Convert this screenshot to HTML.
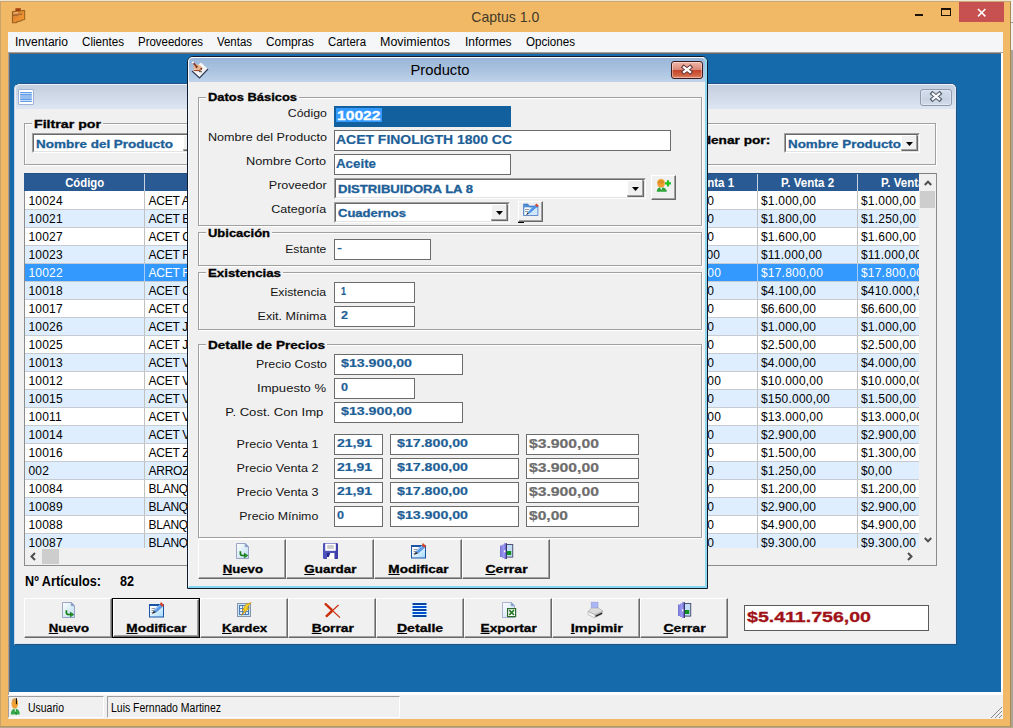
<!DOCTYPE html>
<html><head><meta charset="utf-8"><title>Captus 1.0</title>
<style>
html,body{margin:0;padding:0;}
body{width:1013px;height:728px;position:relative;overflow:hidden;background:#f0b865;font-family:"Liberation Sans",sans-serif;}
div{position:absolute;box-sizing:border-box;}
.t{position:absolute;white-space:nowrap;display:block;}
svg{position:absolute;overflow:visible;}
u{text-decoration:underline;}
</style></head><body>
<div style="left:0px;top:0px;width:1013px;height:728px;background:#aaa493;"></div>
<div style="left:0px;top:0px;width:1013px;height:2px;background:#efe6d2;"></div>
<div style="left:1011px;top:0px;width:2px;height:50px;background:#f2f0eb;"></div>
<div style="left:1011px;top:22px;width:2px;height:1px;background:#9a9a9a;"></div>
<div style="left:0px;top:726px;width:1013px;height:2px;background:#b3a78a;"></div>
<div style="left:0px;top:1px;width:1011px;height:726px;background:#f1b966;border-left:1px solid #c9a26c;border-top:1px solid #c9a674;border-right:1px solid #a88958;border-bottom:1px solid #b89766;"></div>
<svg style="left:12px;top:8px" width="14" height="16" viewBox="0 0 14 16"><defs><linearGradient id="bc" x1="0" y1="0" x2="1" y2="1"><stop offset="0" stop-color="#cf7a3a"/><stop offset="1" stop-color="#fb9d2a"/></linearGradient></defs>
<rect x="3.4" y="0.2" width="5.4" height="3" fill="#a5420f"/>
<path d="M0.4 3.6 L12.7 2.4 V11.6 L9.2 12.2 V13 L5 13.6 V14.6 L0.4 14.9Z" fill="url(#bc)" stroke="#80490f" stroke-width=".8"/>
<path d="M1 7.4 L6 7 L7.5 6 L10 6.4" stroke="#7d5632" stroke-width=".9" fill="none"/><path d="M1.4 5 L6 4.6" stroke="#f6d0a0" stroke-width=".8"/></svg>
<span class="t" style="left:469.23px;top:9px;font-size:15px;line-height:15px;color:#43392a;transform-origin:50% 0;transform:scaleX(0.9373);">Captus 1.0</span>
<div style="left:959px;top:2px;width:45px;height:20px;background:#c75050;"></div>
<svg style="left:977px;top:8px" width="10" height="10" viewBox="0 0 10 10"><path d="M1 1 L8.4 8.4 M8.4 1 L1 8.4" stroke="#fff" stroke-width="1.5" fill="none"/></svg>
<div style="left:915px;top:14px;width:8px;height:2px;background:#1a1204;"></div>
<div style="left:941px;top:8px;width:10px;height:8px;border:1px solid #1a1204;border-top:2px solid #1a1204;"></div>
<div style="left:8px;top:32px;width:995px;height:20px;background:#f5f6f7;"></div>
<span class="t" style="left:15px;top:36px;font-size:12px;line-height:12px;color:#000;transform-origin:0 0;transform:scaleX(1.0057);">Inventario</span>
<span class="t" style="left:82px;top:36px;font-size:12px;line-height:12px;color:#000;transform-origin:0 0;transform:scaleX(0.9688);">Clientes</span>
<span class="t" style="left:138px;top:36px;font-size:12px;line-height:12px;color:#000;transform-origin:0 0;transform:scaleX(0.9553);">Proveedores</span>
<span class="t" style="left:217px;top:36px;font-size:12px;line-height:12px;color:#000;transform-origin:0 0;transform:scaleX(0.9537);">Ventas</span>
<span class="t" style="left:266px;top:36px;font-size:12px;line-height:12px;color:#000;transform-origin:0 0;transform:scaleX(0.9860);">Compras</span>
<span class="t" style="left:328px;top:36px;font-size:12px;line-height:12px;color:#000;transform-origin:0 0;transform:scaleX(0.9496);">Cartera</span>
<span class="t" style="left:380px;top:36px;font-size:12px;line-height:12px;color:#000;transform-origin:0 0;transform:scaleX(1.0393);">Movimientos</span>
<span class="t" style="left:464.5px;top:36px;font-size:12px;line-height:12px;color:#000;transform-origin:0 0;transform:scaleX(0.9961);">Informes</span>
<span class="t" style="left:526px;top:36px;font-size:12px;line-height:12px;color:#000;transform-origin:0 0;transform:scaleX(0.9665);">Opciones</span>
<div style="left:8px;top:52px;width:995px;height:643px;background:#fff;border-top:1px solid #a0a0a0;border-left:1px solid #a0a0a0;"></div>
<div style="left:9px;top:53px;width:992px;height:639px;background:#156aab;border-top:1px solid #6a6a6a;border-left:1px solid #6a6a6a;"></div>
<div style="left:8px;top:695px;width:995px;height:24px;background:#f0f0f0;"></div>
<div style="left:8px;top:696px;width:96px;height:22px;border-top:1px solid #a0a0a0;border-left:1px solid #a0a0a0;border-right:1px solid #fff;border-bottom:1px solid #fff;"></div>
<div style="left:107px;top:696px;width:293px;height:22px;border-top:1px solid #a0a0a0;border-left:1px solid #a0a0a0;border-right:1px solid #fff;border-bottom:1px solid #fff;"></div>
<span class="t" style="left:28px;top:702px;font-size:12px;line-height:12px;color:#000;transform-origin:0 0;transform:scaleX(0.8706);">Usuario</span>
<span class="t" style="left:111px;top:702px;font-size:12px;line-height:12px;color:#000;transform-origin:0 0;transform:scaleX(0.8725);">Luis Fernnado Martinez</span>
<svg style="left:990px;top:706px" width="13" height="13" viewBox="0 0 13 13"><path d="M1 12 L12 1 M5 12 L12 5 M9 12 L12 9" stroke="#8a8a8a" stroke-width="1" fill="none"/></svg>
<svg style="left:10px;top:698px" width="12" height="17" viewBox="0 0 12 17"><ellipse cx="4.8" cy="5.6" rx="3.3" ry="5" fill="#f0a035"/><ellipse cx="4.6" cy="2.4" rx="2.6" ry="1.8" fill="#d9a050"/><rect x="5.9" y="0.2" width="1.1" height="6" fill="#1e1408"/><path d="M0.8 16.6 Q0.8 10.8 5.2 10.8 Q9.8 10.8 9.8 16.6 Z" fill="#35a848"/><path d="M4.6 11 L5.2 15 L5.9 11Z" fill="#fff"/><path d="M5.6 14 L6.4 16.6" stroke="#157a2a" stroke-width="1"/></svg>
<div style="left:14px;top:83px;width:943px;height:562px;background:#f0f0f0;border-radius:6px 6px 0 0;border:1px solid #c9d6e6;border-top-color:#1f5588;border-right-color:#24507f;border-bottom-color:#24507f;"></div>
<div style="left:15px;top:84px;width:941px;height:560px;border-top:1px solid #eef3f9;border-left:1px solid #e9f0f8;border-right:1px solid #dce9f6;border-bottom:1px solid #d6e6f5;border-radius:5px 5px 0 0;"></div>
<div style="left:16px;top:85px;width:939px;height:24px;background:linear-gradient(#c4cfdf,#cfd9e7 45%,#dde6f2);border-radius:4px 4px 0 0;"></div>
<svg style="left:18px;top:89px" width="16" height="16" viewBox="0 0 15 15"><rect x="0.5" y="0.5" width="14" height="14" rx="1" fill="#fff" stroke="#9db4d6"/><path d="M2 3.5H13M2 5.5H13M2 7.5H13M2 9.5H13M2 11.5H13" stroke="#2d7be0" stroke-width="1"/></svg>
<div style="left:920px;top:89px;width:32px;height:17px;border:1px solid #8c9ab0;border-radius:3px;background:linear-gradient(#d3dce9,#cbd5e4 50%,#c6d1e1 51%,#d3dcea);box-shadow:inset 0 0 0 1px rgba(255,255,255,.35);"></div>
<svg style="left:929px;top:91px" width="14" height="11" viewBox="0 0 14 11"><path d="M1.9 1.3 L12.1 9.7 M12.1 1.3 L1.9 9.7" stroke="#4e5867" stroke-width="4.2" fill="none"/><path d="M2.9 2.1 L11.1 8.9 M11.1 2.1 L2.9 8.9" stroke="#f6f8fa" stroke-width="2.3" fill="none"/></svg>
<div style="left:25px;top:124px;width:912px;height:42px;border:1px solid #fff;"></div>
<div style="left:24px;top:123px;width:912px;height:42px;border:1px solid #a0a0a0;"></div>
<div style="left:31.5px;top:121px;width:71px;height:6px;background:#f0f0f0;"></div>
<span class="t" style="left:33.5px;top:119px;font-size:11px;line-height:11px;font-weight:bold;color:#000;-webkit-text-stroke:0.3px currentColor;transform-origin:0 0;transform:scaleX(1.2897);">Filtrar por</span>
<div style="left:32px;top:133px;width:170px;height:20px;border-top:1px solid #a0a0a0;border-left:1px solid #a0a0a0;border-right:1px solid #fff;border-bottom:1px solid #fff;"></div>
<div style="left:33px;top:134px;width:168px;height:18px;background:#fff;border-top:1px solid #696969;border-left:1px solid #696969;border-right:1px solid #e3e3e3;border-bottom:1px solid #e3e3e3;"></div>
<div style="left:183px;top:135px;width:17px;height:16px;background:#f0f0f0;border-top:1px solid #fff;border-left:1px solid #fff;border-right:1px solid #696969;border-bottom:1px solid #696969;"></div>
<div style="left:183px;top:135px;width:16px;height:15px;border-right:1px solid #a0a0a0;border-bottom:1px solid #a0a0a0;"></div>
<svg style="left:188px;top:141.5px" width="7" height="4" viewBox="0 0 7 4"><path d="M0 0H7L3.5 4Z" fill="#000"/></svg>
<span class="t" style="left:36px;top:139px;font-size:11px;line-height:11px;font-weight:bold;color:#1d6097;-webkit-text-stroke:0.3px currentColor;transform-origin:0 0;transform:scaleX(1.2249);">Nombre del Producto</span>
<span class="t" style="right:242.5px;top:135px;font-size:11px;line-height:11px;font-weight:bold;color:#000;-webkit-text-stroke:0.3px currentColor;transform-origin:100% 0;transform:scaleX(1.2420);">Ordenar por:</span>
<div style="left:784px;top:133px;width:136px;height:20px;border-top:1px solid #a0a0a0;border-left:1px solid #a0a0a0;border-right:1px solid #fff;border-bottom:1px solid #fff;"></div>
<div style="left:785px;top:134px;width:134px;height:18px;background:#fff;border-top:1px solid #696969;border-left:1px solid #696969;border-right:1px solid #e3e3e3;border-bottom:1px solid #e3e3e3;"></div>
<div style="left:901px;top:135px;width:17px;height:16px;background:#f0f0f0;border-top:1px solid #fff;border-left:1px solid #fff;border-right:1px solid #696969;border-bottom:1px solid #696969;"></div>
<div style="left:901px;top:135px;width:16px;height:15px;border-right:1px solid #a0a0a0;border-bottom:1px solid #a0a0a0;"></div>
<svg style="left:906px;top:141.5px" width="7" height="4" viewBox="0 0 7 4"><path d="M0 0H7L3.5 4Z" fill="#000"/></svg>
<span class="t" style="left:788px;top:139px;font-size:11px;line-height:11px;font-weight:bold;color:#1d6097;-webkit-text-stroke:0.3px currentColor;transform-origin:0 0;transform:scaleX(1.2164);">Nombre Producto</span>
<div style="left:24px;top:173px;width:913px;height:393px;border-left:1px solid #8c8c8c;border-right:1px solid #8c8c8c;border-bottom:1px solid #8c8c8c;background:#f0f0f0;"></div>
<div style="left:24px;top:173px;width:895px;height:18px;background:#2a5a93;"></div>
<div style="left:25px;top:173px;width:894px;height:375px;overflow:hidden;">
<span class="t" style="left:38.84px;top:4px;font-size:12px;line-height:12px;font-weight:bold;color:#fff;transform-origin:50% 0;transform:scaleX(0.9438);">Código</span>
<div style="left:119px;top:0;width:1px;height:18px;background:#c8d4e4;"></div>
<div style="left:632px;top:0;width:1px;height:18px;background:#c8d4e4;"></div>
<span class="t" style="left:654.92px;top:4px;font-size:12px;line-height:12px;font-weight:bold;color:#fff;transform-origin:50% 0;transform:scaleX(0.9610);">P. Venta 1</span>
<div style="left:732px;top:0;width:1px;height:18px;background:#c8d4e4;"></div>
<span class="t" style="left:754.92px;top:4px;font-size:12px;line-height:12px;font-weight:bold;color:#fff;transform-origin:50% 0;transform:scaleX(0.9610);">P. Venta 2</span>
<div style="left:832px;top:0;width:1px;height:18px;background:#c8d4e4;"></div>
<span class="t" style="left:854.92px;top:4px;font-size:12px;line-height:12px;font-weight:bold;color:#fff;transform-origin:50% 0;transform:scaleX(0.9610);">P. Venta 3</span>
<div style="left:0;top:18px;width:894px;height:18px;background:#fff;"></div>
<div style="left:0;top:36px;width:894px;height:18px;background:#deeeff;"></div>
<div style="left:0;top:54px;width:894px;height:18px;background:#fff;"></div>
<div style="left:0;top:72px;width:894px;height:18px;background:#deeeff;"></div>
<div style="left:0;top:90px;width:894px;height:18px;background:#3399ff;"></div>
<div style="left:0;top:108px;width:894px;height:18px;background:#deeeff;"></div>
<div style="left:0;top:126px;width:894px;height:18px;background:#fff;"></div>
<div style="left:0;top:144px;width:894px;height:18px;background:#deeeff;"></div>
<div style="left:0;top:162px;width:894px;height:18px;background:#fff;"></div>
<div style="left:0;top:180px;width:894px;height:18px;background:#deeeff;"></div>
<div style="left:0;top:198px;width:894px;height:18px;background:#fff;"></div>
<div style="left:0;top:216px;width:894px;height:18px;background:#deeeff;"></div>
<div style="left:0;top:234px;width:894px;height:18px;background:#fff;"></div>
<div style="left:0;top:252px;width:894px;height:18px;background:#deeeff;"></div>
<div style="left:0;top:270px;width:894px;height:18px;background:#fff;"></div>
<div style="left:0;top:288px;width:894px;height:18px;background:#deeeff;"></div>
<div style="left:0;top:306px;width:894px;height:18px;background:#fff;"></div>
<div style="left:0;top:324px;width:894px;height:18px;background:#deeeff;"></div>
<div style="left:0;top:342px;width:894px;height:18px;background:#fff;"></div>
<div style="left:0;top:360px;width:894px;height:18px;background:#deeeff;"></div>
<span class="t" style="left:3.5px;top:22px;font-size:12px;line-height:12px;color:#000;letter-spacing:0.2px;">10024</span>
<div style="left:119px;top:18px;width:1px;height:18px;background:#c0c0c0;"></div>
<span class="t" style="left:123.5px;top:22px;font-size:12px;line-height:12px;color:#000;letter-spacing:-0.25px;">ACET A</span>
<div style="left:632px;top:18px;width:1px;height:18px;background:#c0c0c0;"></div>
<span class="t" style="left:634px;top:22px;font-size:12px;line-height:12px;color:#000;letter-spacing:0.2px;">$1.000,00</span>
<div style="left:732px;top:18px;width:1px;height:18px;background:#c0c0c0;"></div>
<span class="t" style="left:736px;top:22px;font-size:12px;line-height:12px;color:#000;letter-spacing:0.2px;">$1.000,00</span>
<div style="left:832px;top:18px;width:1px;height:18px;background:#c0c0c0;"></div>
<span class="t" style="left:836px;top:22px;font-size:12px;line-height:12px;color:#000;letter-spacing:0.2px;">$1.000,00</span>
<div style="left:0;top:36px;width:894px;height:1px;background:#c6cbd2;"></div>
<span class="t" style="left:3.5px;top:40px;font-size:12px;line-height:12px;color:#000;letter-spacing:0.2px;">10021</span>
<div style="left:119px;top:37px;width:1px;height:18px;background:#c0c0c0;"></div>
<span class="t" style="left:123.5px;top:40px;font-size:12px;line-height:12px;color:#000;letter-spacing:-0.25px;">ACET B</span>
<div style="left:632px;top:37px;width:1px;height:18px;background:#c0c0c0;"></div>
<span class="t" style="left:634px;top:40px;font-size:12px;line-height:12px;color:#000;letter-spacing:0.2px;">$1.800,00</span>
<div style="left:732px;top:37px;width:1px;height:18px;background:#c0c0c0;"></div>
<span class="t" style="left:736px;top:40px;font-size:12px;line-height:12px;color:#000;letter-spacing:0.2px;">$1.800,00</span>
<div style="left:832px;top:37px;width:1px;height:18px;background:#c0c0c0;"></div>
<span class="t" style="left:836px;top:40px;font-size:12px;line-height:12px;color:#000;letter-spacing:0.2px;">$1.250,00</span>
<div style="left:0;top:54px;width:894px;height:1px;background:#c6cbd2;"></div>
<span class="t" style="left:3.5px;top:58px;font-size:12px;line-height:12px;color:#000;letter-spacing:0.2px;">10027</span>
<div style="left:119px;top:55px;width:1px;height:18px;background:#c0c0c0;"></div>
<span class="t" style="left:123.5px;top:58px;font-size:12px;line-height:12px;color:#000;letter-spacing:-0.25px;">ACET C</span>
<div style="left:632px;top:55px;width:1px;height:18px;background:#c0c0c0;"></div>
<span class="t" style="left:634px;top:58px;font-size:12px;line-height:12px;color:#000;letter-spacing:0.2px;">$1.600,00</span>
<div style="left:732px;top:55px;width:1px;height:18px;background:#c0c0c0;"></div>
<span class="t" style="left:736px;top:58px;font-size:12px;line-height:12px;color:#000;letter-spacing:0.2px;">$1.600,00</span>
<div style="left:832px;top:55px;width:1px;height:18px;background:#c0c0c0;"></div>
<span class="t" style="left:836px;top:58px;font-size:12px;line-height:12px;color:#000;letter-spacing:0.2px;">$1.600,00</span>
<div style="left:0;top:72px;width:894px;height:1px;background:#c6cbd2;"></div>
<span class="t" style="left:3.5px;top:76px;font-size:12px;line-height:12px;color:#000;letter-spacing:0.2px;">10023</span>
<div style="left:119px;top:73px;width:1px;height:18px;background:#c0c0c0;"></div>
<span class="t" style="left:123.5px;top:76px;font-size:12px;line-height:12px;color:#000;letter-spacing:-0.25px;">ACET F</span>
<div style="left:632px;top:73px;width:1px;height:18px;background:#c0c0c0;"></div>
<span class="t" style="left:634px;top:76px;font-size:12px;line-height:12px;color:#000;letter-spacing:0.2px;">$11.000,00</span>
<div style="left:732px;top:73px;width:1px;height:18px;background:#c0c0c0;"></div>
<span class="t" style="left:736px;top:76px;font-size:12px;line-height:12px;color:#000;letter-spacing:0.2px;">$11.000,00</span>
<div style="left:832px;top:73px;width:1px;height:18px;background:#c0c0c0;"></div>
<span class="t" style="left:836px;top:76px;font-size:12px;line-height:12px;color:#000;letter-spacing:0.2px;">$11.000,00</span>
<div style="left:0;top:90px;width:894px;height:1px;background:#c6cbd2;"></div>
<span class="t" style="left:3.5px;top:94px;font-size:12px;line-height:12px;color:#fff;letter-spacing:0.2px;">10022</span>
<div style="left:119px;top:91px;width:1px;height:18px;background:#a9cdf3;"></div>
<span class="t" style="left:123.5px;top:94px;font-size:12px;line-height:12px;color:#fff;letter-spacing:-0.25px;">ACET F</span>
<div style="left:632px;top:91px;width:1px;height:18px;background:#a9cdf3;"></div>
<span class="t" style="left:634px;top:94px;font-size:12px;line-height:12px;color:#fff;letter-spacing:0.2px;">$17.800,00</span>
<div style="left:732px;top:91px;width:1px;height:18px;background:#a9cdf3;"></div>
<span class="t" style="left:736px;top:94px;font-size:12px;line-height:12px;color:#fff;letter-spacing:0.2px;">$17.800,00</span>
<div style="left:832px;top:91px;width:1px;height:18px;background:#a9cdf3;"></div>
<span class="t" style="left:836px;top:94px;font-size:12px;line-height:12px;color:#fff;letter-spacing:0.2px;">$17.800,00</span>
<div style="left:0;top:108px;width:894px;height:1px;background:#c6cbd2;"></div>
<span class="t" style="left:3.5px;top:112px;font-size:12px;line-height:12px;color:#000;letter-spacing:0.2px;">10018</span>
<div style="left:119px;top:109px;width:1px;height:18px;background:#c0c0c0;"></div>
<span class="t" style="left:123.5px;top:112px;font-size:12px;line-height:12px;color:#000;letter-spacing:-0.25px;">ACET G</span>
<div style="left:632px;top:109px;width:1px;height:18px;background:#c0c0c0;"></div>
<span class="t" style="left:634px;top:112px;font-size:12px;line-height:12px;color:#000;letter-spacing:0.2px;">$4.100,00</span>
<div style="left:732px;top:109px;width:1px;height:18px;background:#c0c0c0;"></div>
<span class="t" style="left:736px;top:112px;font-size:12px;line-height:12px;color:#000;letter-spacing:0.2px;">$4.100,00</span>
<div style="left:832px;top:109px;width:1px;height:18px;background:#c0c0c0;"></div>
<span class="t" style="left:836px;top:112px;font-size:12px;line-height:12px;color:#000;letter-spacing:0.2px;">$410.000,00</span>
<div style="left:0;top:126px;width:894px;height:1px;background:#c6cbd2;"></div>
<span class="t" style="left:3.5px;top:130px;font-size:12px;line-height:12px;color:#000;letter-spacing:0.2px;">10017</span>
<div style="left:119px;top:127px;width:1px;height:18px;background:#c0c0c0;"></div>
<span class="t" style="left:123.5px;top:130px;font-size:12px;line-height:12px;color:#000;letter-spacing:-0.25px;">ACET G</span>
<div style="left:632px;top:127px;width:1px;height:18px;background:#c0c0c0;"></div>
<span class="t" style="left:634px;top:130px;font-size:12px;line-height:12px;color:#000;letter-spacing:0.2px;">$6.600,00</span>
<div style="left:732px;top:127px;width:1px;height:18px;background:#c0c0c0;"></div>
<span class="t" style="left:736px;top:130px;font-size:12px;line-height:12px;color:#000;letter-spacing:0.2px;">$6.600,00</span>
<div style="left:832px;top:127px;width:1px;height:18px;background:#c0c0c0;"></div>
<span class="t" style="left:836px;top:130px;font-size:12px;line-height:12px;color:#000;letter-spacing:0.2px;">$6.600,00</span>
<div style="left:0;top:144px;width:894px;height:1px;background:#c6cbd2;"></div>
<span class="t" style="left:3.5px;top:148px;font-size:12px;line-height:12px;color:#000;letter-spacing:0.2px;">10026</span>
<div style="left:119px;top:145px;width:1px;height:18px;background:#c0c0c0;"></div>
<span class="t" style="left:123.5px;top:148px;font-size:12px;line-height:12px;color:#000;letter-spacing:-0.25px;">ACET J</span>
<div style="left:632px;top:145px;width:1px;height:18px;background:#c0c0c0;"></div>
<span class="t" style="left:634px;top:148px;font-size:12px;line-height:12px;color:#000;letter-spacing:0.2px;">$1.000,00</span>
<div style="left:732px;top:145px;width:1px;height:18px;background:#c0c0c0;"></div>
<span class="t" style="left:736px;top:148px;font-size:12px;line-height:12px;color:#000;letter-spacing:0.2px;">$1.000,00</span>
<div style="left:832px;top:145px;width:1px;height:18px;background:#c0c0c0;"></div>
<span class="t" style="left:836px;top:148px;font-size:12px;line-height:12px;color:#000;letter-spacing:0.2px;">$1.000,00</span>
<div style="left:0;top:162px;width:894px;height:1px;background:#c6cbd2;"></div>
<span class="t" style="left:3.5px;top:166px;font-size:12px;line-height:12px;color:#000;letter-spacing:0.2px;">10025</span>
<div style="left:119px;top:163px;width:1px;height:18px;background:#c0c0c0;"></div>
<span class="t" style="left:123.5px;top:166px;font-size:12px;line-height:12px;color:#000;letter-spacing:-0.25px;">ACET J</span>
<div style="left:632px;top:163px;width:1px;height:18px;background:#c0c0c0;"></div>
<span class="t" style="left:634px;top:166px;font-size:12px;line-height:12px;color:#000;letter-spacing:0.2px;">$2.500,00</span>
<div style="left:732px;top:163px;width:1px;height:18px;background:#c0c0c0;"></div>
<span class="t" style="left:736px;top:166px;font-size:12px;line-height:12px;color:#000;letter-spacing:0.2px;">$2.500,00</span>
<div style="left:832px;top:163px;width:1px;height:18px;background:#c0c0c0;"></div>
<span class="t" style="left:836px;top:166px;font-size:12px;line-height:12px;color:#000;letter-spacing:0.2px;">$2.500,00</span>
<div style="left:0;top:180px;width:894px;height:1px;background:#c6cbd2;"></div>
<span class="t" style="left:3.5px;top:184px;font-size:12px;line-height:12px;color:#000;letter-spacing:0.2px;">10013</span>
<div style="left:119px;top:181px;width:1px;height:18px;background:#c0c0c0;"></div>
<span class="t" style="left:123.5px;top:184px;font-size:12px;line-height:12px;color:#000;letter-spacing:-0.25px;">ACET V</span>
<div style="left:632px;top:181px;width:1px;height:18px;background:#c0c0c0;"></div>
<span class="t" style="left:634px;top:184px;font-size:12px;line-height:12px;color:#000;letter-spacing:0.2px;">$4.000,00</span>
<div style="left:732px;top:181px;width:1px;height:18px;background:#c0c0c0;"></div>
<span class="t" style="left:736px;top:184px;font-size:12px;line-height:12px;color:#000;letter-spacing:0.2px;">$4.000,00</span>
<div style="left:832px;top:181px;width:1px;height:18px;background:#c0c0c0;"></div>
<span class="t" style="left:836px;top:184px;font-size:12px;line-height:12px;color:#000;letter-spacing:0.2px;">$4.000,00</span>
<div style="left:0;top:198px;width:894px;height:1px;background:#c6cbd2;"></div>
<span class="t" style="left:3.5px;top:202px;font-size:12px;line-height:12px;color:#000;letter-spacing:0.2px;">10012</span>
<div style="left:119px;top:199px;width:1px;height:18px;background:#c0c0c0;"></div>
<span class="t" style="left:123.5px;top:202px;font-size:12px;line-height:12px;color:#000;letter-spacing:-0.25px;">ACET V</span>
<div style="left:632px;top:199px;width:1px;height:18px;background:#c0c0c0;"></div>
<span class="t" style="left:634px;top:202px;font-size:12px;line-height:12px;color:#000;letter-spacing:0.2px;">$10.000,00</span>
<div style="left:732px;top:199px;width:1px;height:18px;background:#c0c0c0;"></div>
<span class="t" style="left:736px;top:202px;font-size:12px;line-height:12px;color:#000;letter-spacing:0.2px;">$10.000,00</span>
<div style="left:832px;top:199px;width:1px;height:18px;background:#c0c0c0;"></div>
<span class="t" style="left:836px;top:202px;font-size:12px;line-height:12px;color:#000;letter-spacing:0.2px;">$10.000,00</span>
<div style="left:0;top:216px;width:894px;height:1px;background:#c6cbd2;"></div>
<span class="t" style="left:3.5px;top:220px;font-size:12px;line-height:12px;color:#000;letter-spacing:0.2px;">10015</span>
<div style="left:119px;top:217px;width:1px;height:18px;background:#c0c0c0;"></div>
<span class="t" style="left:123.5px;top:220px;font-size:12px;line-height:12px;color:#000;letter-spacing:-0.25px;">ACET V</span>
<div style="left:632px;top:217px;width:1px;height:18px;background:#c0c0c0;"></div>
<span class="t" style="left:634px;top:220px;font-size:12px;line-height:12px;color:#000;letter-spacing:0.2px;">$1.500,00</span>
<div style="left:732px;top:217px;width:1px;height:18px;background:#c0c0c0;"></div>
<span class="t" style="left:736px;top:220px;font-size:12px;line-height:12px;color:#000;letter-spacing:0.2px;">$150.000,00</span>
<div style="left:832px;top:217px;width:1px;height:18px;background:#c0c0c0;"></div>
<span class="t" style="left:836px;top:220px;font-size:12px;line-height:12px;color:#000;letter-spacing:0.2px;">$1.500,00</span>
<div style="left:0;top:234px;width:894px;height:1px;background:#c6cbd2;"></div>
<span class="t" style="left:3.5px;top:238px;font-size:12px;line-height:12px;color:#000;letter-spacing:0.2px;">10011</span>
<div style="left:119px;top:235px;width:1px;height:18px;background:#c0c0c0;"></div>
<span class="t" style="left:123.5px;top:238px;font-size:12px;line-height:12px;color:#000;letter-spacing:-0.25px;">ACET V</span>
<div style="left:632px;top:235px;width:1px;height:18px;background:#c0c0c0;"></div>
<span class="t" style="left:634px;top:238px;font-size:12px;line-height:12px;color:#000;letter-spacing:0.2px;">$13.000,00</span>
<div style="left:732px;top:235px;width:1px;height:18px;background:#c0c0c0;"></div>
<span class="t" style="left:736px;top:238px;font-size:12px;line-height:12px;color:#000;letter-spacing:0.2px;">$13.000,00</span>
<div style="left:832px;top:235px;width:1px;height:18px;background:#c0c0c0;"></div>
<span class="t" style="left:836px;top:238px;font-size:12px;line-height:12px;color:#000;letter-spacing:0.2px;">$13.000,00</span>
<div style="left:0;top:252px;width:894px;height:1px;background:#c6cbd2;"></div>
<span class="t" style="left:3.5px;top:256px;font-size:12px;line-height:12px;color:#000;letter-spacing:0.2px;">10014</span>
<div style="left:119px;top:253px;width:1px;height:18px;background:#c0c0c0;"></div>
<span class="t" style="left:123.5px;top:256px;font-size:12px;line-height:12px;color:#000;letter-spacing:-0.25px;">ACET V</span>
<div style="left:632px;top:253px;width:1px;height:18px;background:#c0c0c0;"></div>
<span class="t" style="left:634px;top:256px;font-size:12px;line-height:12px;color:#000;letter-spacing:0.2px;">$2.900,00</span>
<div style="left:732px;top:253px;width:1px;height:18px;background:#c0c0c0;"></div>
<span class="t" style="left:736px;top:256px;font-size:12px;line-height:12px;color:#000;letter-spacing:0.2px;">$2.900,00</span>
<div style="left:832px;top:253px;width:1px;height:18px;background:#c0c0c0;"></div>
<span class="t" style="left:836px;top:256px;font-size:12px;line-height:12px;color:#000;letter-spacing:0.2px;">$2.900,00</span>
<div style="left:0;top:270px;width:894px;height:1px;background:#c6cbd2;"></div>
<span class="t" style="left:3.5px;top:274px;font-size:12px;line-height:12px;color:#000;letter-spacing:0.2px;">10016</span>
<div style="left:119px;top:271px;width:1px;height:18px;background:#c0c0c0;"></div>
<span class="t" style="left:123.5px;top:274px;font-size:12px;line-height:12px;color:#000;letter-spacing:-0.25px;">ACET Z</span>
<div style="left:632px;top:271px;width:1px;height:18px;background:#c0c0c0;"></div>
<span class="t" style="left:634px;top:274px;font-size:12px;line-height:12px;color:#000;letter-spacing:0.2px;">$1.500,00</span>
<div style="left:732px;top:271px;width:1px;height:18px;background:#c0c0c0;"></div>
<span class="t" style="left:736px;top:274px;font-size:12px;line-height:12px;color:#000;letter-spacing:0.2px;">$1.500,00</span>
<div style="left:832px;top:271px;width:1px;height:18px;background:#c0c0c0;"></div>
<span class="t" style="left:836px;top:274px;font-size:12px;line-height:12px;color:#000;letter-spacing:0.2px;">$1.300,00</span>
<div style="left:0;top:288px;width:894px;height:1px;background:#c6cbd2;"></div>
<span class="t" style="left:3.5px;top:292px;font-size:12px;line-height:12px;color:#000;letter-spacing:0.2px;">002</span>
<div style="left:119px;top:289px;width:1px;height:18px;background:#c0c0c0;"></div>
<span class="t" style="left:123.5px;top:292px;font-size:12px;line-height:12px;color:#000;letter-spacing:-0.25px;">ARROZ</span>
<div style="left:632px;top:289px;width:1px;height:18px;background:#c0c0c0;"></div>
<span class="t" style="left:634px;top:292px;font-size:12px;line-height:12px;color:#000;letter-spacing:0.2px;">$1.250,00</span>
<div style="left:732px;top:289px;width:1px;height:18px;background:#c0c0c0;"></div>
<span class="t" style="left:736px;top:292px;font-size:12px;line-height:12px;color:#000;letter-spacing:0.2px;">$1.250,00</span>
<div style="left:832px;top:289px;width:1px;height:18px;background:#c0c0c0;"></div>
<span class="t" style="left:836px;top:292px;font-size:12px;line-height:12px;color:#000;letter-spacing:0.2px;">$0,00</span>
<div style="left:0;top:306px;width:894px;height:1px;background:#c6cbd2;"></div>
<span class="t" style="left:3.5px;top:310px;font-size:12px;line-height:12px;color:#000;letter-spacing:0.2px;">10084</span>
<div style="left:119px;top:307px;width:1px;height:18px;background:#c0c0c0;"></div>
<span class="t" style="left:123.5px;top:310px;font-size:12px;line-height:12px;color:#000;letter-spacing:-0.25px;">BLANQ</span>
<div style="left:632px;top:307px;width:1px;height:18px;background:#c0c0c0;"></div>
<span class="t" style="left:634px;top:310px;font-size:12px;line-height:12px;color:#000;letter-spacing:0.2px;">$1.200,00</span>
<div style="left:732px;top:307px;width:1px;height:18px;background:#c0c0c0;"></div>
<span class="t" style="left:736px;top:310px;font-size:12px;line-height:12px;color:#000;letter-spacing:0.2px;">$1.200,00</span>
<div style="left:832px;top:307px;width:1px;height:18px;background:#c0c0c0;"></div>
<span class="t" style="left:836px;top:310px;font-size:12px;line-height:12px;color:#000;letter-spacing:0.2px;">$1.200,00</span>
<div style="left:0;top:324px;width:894px;height:1px;background:#c6cbd2;"></div>
<span class="t" style="left:3.5px;top:328px;font-size:12px;line-height:12px;color:#000;letter-spacing:0.2px;">10089</span>
<div style="left:119px;top:325px;width:1px;height:18px;background:#c0c0c0;"></div>
<span class="t" style="left:123.5px;top:328px;font-size:12px;line-height:12px;color:#000;letter-spacing:-0.25px;">BLANQ</span>
<div style="left:632px;top:325px;width:1px;height:18px;background:#c0c0c0;"></div>
<span class="t" style="left:634px;top:328px;font-size:12px;line-height:12px;color:#000;letter-spacing:0.2px;">$2.900,00</span>
<div style="left:732px;top:325px;width:1px;height:18px;background:#c0c0c0;"></div>
<span class="t" style="left:736px;top:328px;font-size:12px;line-height:12px;color:#000;letter-spacing:0.2px;">$2.900,00</span>
<div style="left:832px;top:325px;width:1px;height:18px;background:#c0c0c0;"></div>
<span class="t" style="left:836px;top:328px;font-size:12px;line-height:12px;color:#000;letter-spacing:0.2px;">$2.900,00</span>
<div style="left:0;top:342px;width:894px;height:1px;background:#c6cbd2;"></div>
<span class="t" style="left:3.5px;top:346px;font-size:12px;line-height:12px;color:#000;letter-spacing:0.2px;">10088</span>
<div style="left:119px;top:343px;width:1px;height:18px;background:#c0c0c0;"></div>
<span class="t" style="left:123.5px;top:346px;font-size:12px;line-height:12px;color:#000;letter-spacing:-0.25px;">BLANQ</span>
<div style="left:632px;top:343px;width:1px;height:18px;background:#c0c0c0;"></div>
<span class="t" style="left:634px;top:346px;font-size:12px;line-height:12px;color:#000;letter-spacing:0.2px;">$4.900,00</span>
<div style="left:732px;top:343px;width:1px;height:18px;background:#c0c0c0;"></div>
<span class="t" style="left:736px;top:346px;font-size:12px;line-height:12px;color:#000;letter-spacing:0.2px;">$4.900,00</span>
<div style="left:832px;top:343px;width:1px;height:18px;background:#c0c0c0;"></div>
<span class="t" style="left:836px;top:346px;font-size:12px;line-height:12px;color:#000;letter-spacing:0.2px;">$4.900,00</span>
<div style="left:0;top:360px;width:894px;height:1px;background:#c6cbd2;"></div>
<span class="t" style="left:3.5px;top:364px;font-size:12px;line-height:12px;color:#000;letter-spacing:0.2px;">10087</span>
<div style="left:119px;top:361px;width:1px;height:18px;background:#c0c0c0;"></div>
<span class="t" style="left:123.5px;top:364px;font-size:12px;line-height:12px;color:#000;letter-spacing:-0.25px;">BLANQ</span>
<div style="left:632px;top:361px;width:1px;height:18px;background:#c0c0c0;"></div>
<span class="t" style="left:634px;top:364px;font-size:12px;line-height:12px;color:#000;letter-spacing:0.2px;">$9.300,00</span>
<div style="left:732px;top:361px;width:1px;height:18px;background:#c0c0c0;"></div>
<span class="t" style="left:736px;top:364px;font-size:12px;line-height:12px;color:#000;letter-spacing:0.2px;">$9.300,00</span>
<div style="left:832px;top:361px;width:1px;height:18px;background:#c0c0c0;"></div>
<span class="t" style="left:836px;top:364px;font-size:12px;line-height:12px;color:#000;letter-spacing:0.2px;">$9.300,00</span>
</div>
<div style="left:919px;top:173px;width:17px;height:375px;background:#f0f0f0;"></div>
<div style="left:920px;top:191px;width:15px;height:17px;background:#cdcdcd;"></div>
<div style="left:919px;top:173px;width:17px;height:1px;background:#808080;"></div>
<div style="left:24px;top:173px;width:895px;height:1px;background:#244f83;"></div>
<svg style="left:923.5px;top:180px" width="8" height="6" viewBox="0 0 8 6"><path d="M0.8 5 L4 1.6 L7.2 5" stroke="#4d4d4d" stroke-width="2" fill="none"/></svg>
<svg style="left:923.5px;top:537px" width="8" height="6" viewBox="0 0 8 6"><path d="M0.8 1 L4 4.4 L7.2 1" stroke="#4d4d4d" stroke-width="2" fill="none"/></svg>
<div style="left:25px;top:548px;width:911px;height:17px;background:#f0f0f0;"></div>
<div style="left:42px;top:549px;width:17px;height:15px;background:#cdcdcd;"></div>
<svg style="left:30px;top:552px" width="6" height="9" viewBox="0 0 6 9"><path d="M5 1 L1.5 4.5 L5 8" stroke="#4d4d4d" stroke-width="2" fill="none"/></svg>
<svg style="left:907px;top:552px" width="6" height="9" viewBox="0 0 6 9"><path d="M1 1 L4.5 4.5 L1 8" stroke="#4d4d4d" stroke-width="2" fill="none"/></svg>
<span class="t" style="left:24.5px;top:574px;font-size:14px;line-height:14px;font-weight:bold;color:#000;transform-origin:0 0;transform:scaleX(0.9055);">Nº Artículos:</span>
<span class="t" style="left:120px;top:574px;font-size:14px;line-height:14px;font-weight:bold;color:#000;transform-origin:0 0;transform:scaleX(0.8990);">82</span>
<div style="left:24px;top:598px;width:88px;height:40px;background:#f0f0f0;border-top:1px solid #fff;border-left:1px solid #fff;border-right:1px solid #696969;border-bottom:1px solid #696969;"></div>
<div style="left:25px;top:599px;width:86px;height:38px;border-right:1px solid #a0a0a0;border-bottom:1px solid #a0a0a0;"></div>
<span class="t" style="left:51.59px;top:623px;font-size:11px;line-height:11px;font-weight:bold;color:#000;-webkit-text-stroke:0.3px currentColor;transform-origin:50% 0;transform:scaleX(1.1958);"><u>N</u>uevo</span>
<svg style="left:60px;top:602px" width="16" height="16" viewBox="0 0 16 16"><defs><linearGradient id="pg1" x1="0" y1="0" x2="1" y2="1"><stop offset="0" stop-color="#ffffff"/><stop offset="1" stop-color="#b9dcef"/></linearGradient></defs>
<path d="M2.5 0.5 H11.2 L14.5 3.8 V15.5 H2.5Z" fill="url(#pg1)" stroke="#8d96ba" stroke-width=".85"/>
<path d="M11.2 0.5 V3.8 H14.5Z" fill="#7f9fd8" stroke="#8b93b6" stroke-width=".6"/>
<path d="M6.4 8.2 V10.8 Q6.4 12.5 9 12.5 H11" stroke="#157d15" stroke-width="1.7" fill="none"/>
<path d="M10.4 10.2 L13.8 12.5 L10.4 14.8Z" fill="#22a322" stroke="#0b5a0b" stroke-width=".6"/></svg>
<div style="left:112px;top:598px;width:88px;height:40px;border:1px solid #000;background:#f0f0f0;"></div>
<div style="left:113px;top:599px;width:86px;height:38px;border-top:1px solid #fff;border-left:1px solid #fff;border-right:1px solid #696969;border-bottom:1px solid #696969;"></div>
<div style="left:114px;top:600px;width:84px;height:36px;border-right:1px solid #a0a0a0;border-bottom:1px solid #a0a0a0;"></div>
<span class="t" style="left:131.95px;top:623px;font-size:11px;line-height:11px;font-weight:bold;color:#000;-webkit-text-stroke:0.3px currentColor;transform-origin:50% 0;transform:scaleX(1.2312);"><u>M</u>odificar</span>
<svg style="left:148px;top:602px" width="16" height="16" viewBox="0 0 16 16"><defs><linearGradient id="mg2" x1="0" y1="0" x2="1" y2="1"><stop offset="0.2" stop-color="#ffffff"/><stop offset="1" stop-color="#9fd8ff"/></linearGradient></defs>
<rect x="1.5" y="2.5" width="14" height="12.5" fill="url(#mg2)" stroke="#1b55a3"/>
<rect x="1" y="2" width="15" height="2" fill="#1b55a3"/>
<path d="M3.5 6.5H7M3.5 8.5H6M3.5 10.5H5" stroke="#9a9a9a"/>
<path d="M11.8 2.2 L14.4 4.8 L7.8 10.4 L6 8.6Z" fill="#5b9be9" stroke="#3a78c8" stroke-width=".5"/>
<path d="M6.6 8 L11.9 3.4" stroke="#a9d0ff" stroke-width=".9"/>
<path d="M13 0 L16.2 3.2 L14.4 4.8 L11.8 2.2Z" fill="#d8452a"/>
<path d="M6 8.6 L7.8 10.4 L3.8 12Z" fill="#2e2e2e"/></svg>
<div style="left:200px;top:598px;width:88px;height:40px;background:#f0f0f0;border-top:1px solid #fff;border-left:1px solid #fff;border-right:1px solid #696969;border-bottom:1px solid #696969;"></div>
<div style="left:201px;top:599px;width:86px;height:38px;border-right:1px solid #a0a0a0;border-bottom:1px solid #a0a0a0;"></div>
<span class="t" style="left:225.75px;top:623px;font-size:11px;line-height:11px;font-weight:bold;color:#000;-webkit-text-stroke:0.3px currentColor;transform-origin:50% 0;transform:scaleX(1.2119);"><u>K</u>ardex</span>
<svg style="left:236px;top:602px" width="16" height="16" viewBox="0 0 16 16"><rect x="1.5" y="1.5" width="13" height="13" fill="#d8f0ff" stroke="#8796ad"/>
<rect x="3.5" y="3.5" width="9" height="9" fill="#ffffff" stroke="#4c7cb6" stroke-width="1.2"/>
<path d="M3.5 6.6H12.5M3.5 9.6H12.5M6.6 3.5V12.5M9.6 3.5V12.5" stroke="#4c7cb6" stroke-width="1"/>
<path d="M15.2 0.6 L10 2.4 L6.4 8.2 L9 7.8 L5.6 13.4 L13.4 6 L10.6 6.3Z" fill="#f8d81c" stroke="#c98a14" stroke-width=".7"/></svg>
<div style="left:288px;top:598px;width:88px;height:40px;background:#f0f0f0;border-top:1px solid #fff;border-left:1px solid #fff;border-right:1px solid #696969;border-bottom:1px solid #696969;"></div>
<div style="left:289px;top:599px;width:86px;height:38px;border-right:1px solid #a0a0a0;border-bottom:1px solid #a0a0a0;"></div>
<span class="t" style="left:315.59px;top:623px;font-size:11px;line-height:11px;font-weight:bold;color:#000;-webkit-text-stroke:0.3px currentColor;transform-origin:50% 0;transform:scaleX(1.2551);"><u>B</u>orrar</span>
<svg style="left:324px;top:602px" width="16" height="16" viewBox="0 0 16 16"><path d="M1 1.5 L16 15.6" stroke="#cc2d0b" stroke-width="1.2"/><path d="M1 1.5 L8 8.1" stroke="#cc2d0b" stroke-width="2.4"/>
<path d="M14.5 3 L2 14.6" stroke="#cc2d0b" stroke-width="1.2"/><path d="M8 9 L2 14.6" stroke="#cc2d0b" stroke-width="2.4"/></svg>
<div style="left:376px;top:598px;width:88px;height:40px;background:#f0f0f0;border-top:1px solid #fff;border-left:1px solid #fff;border-right:1px solid #696969;border-bottom:1px solid #696969;"></div>
<div style="left:377px;top:599px;width:86px;height:38px;border-right:1px solid #a0a0a0;border-bottom:1px solid #a0a0a0;"></div>
<span class="t" style="left:402.36px;top:623px;font-size:11px;line-height:11px;font-weight:bold;color:#000;-webkit-text-stroke:0.3px currentColor;transform-origin:50% 0;transform:scaleX(1.2807);"><u>D</u>etalle</span>
<svg style="left:412px;top:602px" width="16" height="16" viewBox="0 0 16 16"><rect x="0" y="0" width="15" height="16" fill="#dbffff"/><rect x="0.5" y="1" width="14" height="2" fill="#12409e"/><rect x="0.5" y="4" width="14" height="2" fill="#0350d6"/><rect x="0.5" y="7" width="14" height="2" fill="#12409e"/><rect x="0.5" y="10" width="14" height="2" fill="#0350d6"/><rect x="0.5" y="13" width="14" height="2" fill="#12409e"/></svg>
<div style="left:464px;top:598px;width:88px;height:40px;background:#f0f0f0;border-top:1px solid #fff;border-left:1px solid #fff;border-right:1px solid #696969;border-bottom:1px solid #696969;"></div>
<div style="left:465px;top:599px;width:86px;height:38px;border-right:1px solid #a0a0a0;border-bottom:1px solid #a0a0a0;"></div>
<span class="t" style="left:485.78px;top:623px;font-size:11px;line-height:11px;font-weight:bold;color:#000;-webkit-text-stroke:0.3px currentColor;transform-origin:50% 0;transform:scaleX(1.2424);"><u>E</u>xportar</span>
<svg style="left:500px;top:602px" width="16" height="16" viewBox="0 0 16 16"><defs><linearGradient id="eg6" x1="0" y1="0" x2="1" y2="1"><stop offset="0" stop-color="#ffffff"/><stop offset="1" stop-color="#c4dcf2"/></linearGradient></defs>
<path d="M2.5 0.5 H11.2 L14.5 3.8 V15.5 H2.5Z" fill="url(#eg6)" stroke="#9aa2c6" stroke-width=".8"/>
<path d="M11.2 0.5 V3.8 H14.5Z" fill="#6fa6e0" stroke="#8b93b6" stroke-width=".6"/>
<rect x="7.6" y="6.6" width="8" height="8" fill="#ffffff" stroke="#2c6b2c" stroke-width="1.2"/>
<path d="M9.3 8.2 L14 13 M14 8.2 L9.3 13" stroke="#237a23" stroke-width="1.7"/></svg>
<div style="left:552px;top:598px;width:88px;height:40px;background:#f0f0f0;border-top:1px solid #fff;border-left:1px solid #fff;border-right:1px solid #696969;border-bottom:1px solid #696969;"></div>
<div style="left:553px;top:599px;width:86px;height:38px;border-right:1px solid #a0a0a0;border-bottom:1px solid #a0a0a0;"></div>
<span class="t" style="left:576.54px;top:623px;font-size:11px;line-height:11px;font-weight:bold;color:#000;-webkit-text-stroke:0.3px currentColor;transform-origin:50% 0;transform:scaleX(1.3139);"><u>I</u>mpimir</span>
<svg style="left:588px;top:602px" width="16" height="16" viewBox="0 0 16 16"><rect x="3.2" y="0.2" width="6.8" height="6.4" fill="#a9b5f5" stroke="#8e9bd8" stroke-width=".6"/>
<path d="M0 9.4 L3.6 6 H10.4 L15 9 V12.2 L7 16 L0 12.6Z" fill="#c4c4c4"/>
<path d="M0 9.4 L7 12.6 L15 9 L10.4 6 H3.6Z" fill="#dcdcdc" stroke="#9d9d9d" stroke-width=".5"/>
<path d="M0 9.6 L7 12.8 V16 L0 12.6Z" fill="#f7f7f7" stroke="#9a9a9a" stroke-width=".5"/>
<path d="M7.6 13.6 L14 10.6 V11.9 L7.6 14.9Z" fill="#1c1c1c"/></svg>
<div style="left:640px;top:598px;width:88px;height:40px;background:#f0f0f0;border-top:1px solid #fff;border-left:1px solid #fff;border-right:1px solid #696969;border-bottom:1px solid #696969;"></div>
<div style="left:641px;top:599px;width:86px;height:38px;border-right:1px solid #a0a0a0;border-bottom:1px solid #a0a0a0;"></div>
<span class="t" style="left:667.89px;top:623px;font-size:11px;line-height:11px;font-weight:bold;color:#000;-webkit-text-stroke:0.3px currentColor;transform-origin:50% 0;transform:scaleX(1.2780);"><u>C</u>errar</span>
<svg style="left:676px;top:602px" width="16" height="16" viewBox="0 0 16 16"><defs><linearGradient id="dg8" x1="0" y1="0" x2="1" y2="0"><stop offset="0" stop-color="#7272d2"/><stop offset=".5" stop-color="#9a98f2"/><stop offset="1" stop-color="#7c7cdc"/></linearGradient></defs>
<rect x="8.5" y="1.5" width="6.2" height="12.6" fill="#c3dcf8" stroke="#4b5273"/>
<rect x="8.5" y="8" width="4.7" height="4" fill="#0f9020"/>
<path d="M2 2.5 L4 2.5 L4 1.6 L6 1.6 L6 0.2 L8.6 0.2 V16 L6 16 L6 15 L4 15 L4 14 L2 14Z" fill="url(#dg8)"/>
<rect x="7.8" y="0.2" width="1" height="15.8" fill="#2c2c5e"/>
<rect x="6" y="7.3" width="1.3" height="2" fill="#fff"/></svg>
<div style="left:744px;top:605px;width:185px;height:26px;background:#fff;border:1px solid #5a5a5a;"></div>
<span class="t" style="left:747px;top:609px;font-size:15px;line-height:15px;font-weight:bold;color:#a01217;-webkit-text-stroke:0.3px currentColor;transform-origin:0 0;transform:scaleX(1.3039);">$5.411.756,00</span>
<div style="left:187px;top:56px;width:521px;height:533px;background:#f0f0f0;border:1px solid #101c2e;border-radius:6px 6px 0 0;"></div>
<div style="left:188px;top:57px;width:519px;height:531px;border-top:1px solid #fff;border-left:1px solid #f4fbfe;border-right:2px solid #8fd8ef;border-bottom:2px solid #84d6ef;border-radius:5px 5px 0 0;"></div>
<div style="left:189px;top:58px;width:516px;height:24px;background:linear-gradient(#9ab6d8,#a9c2e0 50%,#bfd4ea);border-radius:4px 4px 0 0;"></div>
<span class="t" style="left:409.98px;top:62px;font-size:15px;line-height:15px;color:#000;transform-origin:50% 0;transform:scaleX(0.9827);">Producto</span>
<div style="left:671px;top:61px;width:32px;height:18px;border:1px solid #3d1c1c;border-radius:3px;background:linear-gradient(#efb6a8,#dc8a79 47%,#c5442a 52%,#d0603f 80%,#df8568);box-shadow:inset 0 0 0 1px rgba(255,255,255,.4);"></div>
<svg style="left:680px;top:64px" width="14" height="11" viewBox="0 0 14 11"><path d="M2.1 1.9 L11.9 9.3 M11.9 1.9 L2.1 9.3" stroke="#6b3d3d" stroke-width="4.2" fill="none"/><path d="M3.1 2.65 L10.9 8.55 M10.9 2.65 L3.1 8.55" stroke="#ffffff" stroke-width="2.3" fill="none"/></svg>
<svg style="left:191px;top:61px" width="18" height="18" viewBox="0 0 18 18">
<path d="M10 1.5 L17 8 L8.5 17 L1 10 Z" fill="#f3f3f4"/>
<path d="M17 8 L8.5 17 L1 10" fill="none" stroke="#2c3a52" stroke-width="1.1"/>
<ellipse cx="6.8" cy="6.6" rx="4.6" ry="2.9" transform="rotate(22 6.8 6.6)" fill="#e8b48c"/>
<path d="M2.2 1.6 L5 5" stroke="#8c3b2a" stroke-width="1.8"/><circle cx="2" cy="1.6" r="1" fill="#fff"/>
<circle cx="5.6" cy="5.8" r="1.1" fill="#5a2410"/><circle cx="10.3" cy="7.6" r="0.9" fill="#6a2a14"/>
<path d="M2.5 9.3 L7 9.8 L10.5 8.6" stroke="#9a3a22" stroke-width="1" fill="none"/>
<path d="M8 10.6 L11 10.8" stroke="#4a4a4a" stroke-width="1"/></svg>
<div style="left:199px;top:98px;width:504px;height:129px;border:1px solid #fff;"></div>
<div style="left:198px;top:97px;width:504px;height:129px;border:1px solid #a0a0a0;"></div>
<div style="left:205.7px;top:95px;width:93px;height:6px;background:#f0f0f0;"></div>
<span class="t" style="left:207.7px;top:92px;font-size:11px;line-height:11px;font-weight:bold;color:#000;-webkit-text-stroke:0.3px currentColor;transform-origin:0 0;transform:scaleX(1.1740);">Datos Básicos</span>
<span class="t" style="right:686.5px;top:108px;font-size:11px;line-height:11px;color:#151515;transform-origin:100% 0;transform:scaleX(1.1188);">Código</span>
<div style="left:334px;top:106px;width:177px;height:21px;background:#13609e;border:1px solid #13609e;"></div>
<div style="left:336px;top:108px;width:46px;height:14px;background:#3399ff;"></div>
<span class="t" style="left:337px;top:109px;font-size:13px;line-height:13px;font-weight:bold;color:#fff;-webkit-text-stroke:0.3px currentColor;transform-origin:0 0;transform:scaleX(1.2033);">10022</span>
<span class="t" style="right:686.5px;top:132px;font-size:11px;line-height:11px;color:#151515;transform-origin:100% 0;transform:scaleX(1.1448);">Nombre del Producto</span>
<div style="left:334px;top:130px;width:337px;height:21px;background:#fff;border:1px solid #6b6b6b;"></div>
<span class="t" style="left:335.7px;top:133px;font-size:13px;line-height:13px;font-weight:bold;color:#1d6097;-webkit-text-stroke:0.2px currentColor;transform-origin:0 0;transform:scaleX(1.0734);">ACET FINOLIGTH 1800 CC</span>
<span class="t" style="right:686.5px;top:156px;font-size:11px;line-height:11px;color:#151515;transform-origin:100% 0;transform:scaleX(1.1581);">Nombre Corto</span>
<div style="left:334px;top:154px;width:177px;height:21px;background:#fff;border:1px solid #6b6b6b;"></div>
<span class="t" style="left:335.7px;top:157px;font-size:13px;line-height:13px;font-weight:bold;color:#1d6097;-webkit-text-stroke:0.2px currentColor;transform-origin:0 0;transform:scaleX(1.0251);">Aceite</span>
<span class="t" style="right:686.5px;top:180px;font-size:11px;line-height:11px;color:#151515;transform-origin:100% 0;transform:scaleX(1.1428);">Proveedor</span>
<div style="left:334px;top:178px;width:312px;height:21px;border-top:1px solid #a0a0a0;border-left:1px solid #a0a0a0;border-right:1px solid #fff;border-bottom:1px solid #fff;"></div>
<div style="left:335px;top:179px;width:310px;height:19px;background:#fff;border-top:1px solid #696969;border-left:1px solid #696969;border-right:1px solid #e3e3e3;border-bottom:1px solid #e3e3e3;"></div>
<div style="left:627px;top:180px;width:17px;height:17px;background:#f0f0f0;border-top:1px solid #fff;border-left:1px solid #fff;border-right:1px solid #696969;border-bottom:1px solid #696969;"></div>
<div style="left:627px;top:180px;width:16px;height:16px;border-right:1px solid #a0a0a0;border-bottom:1px solid #a0a0a0;"></div>
<svg style="left:632px;top:187.0px" width="7" height="4" viewBox="0 0 7 4"><path d="M0 0H7L3.5 4Z" fill="#000"/></svg>
<span class="t" style="left:338.3px;top:185px;font-size:10px;line-height:10px;font-weight:bold;color:#1d6097;-webkit-text-stroke:0.3px currentColor;transform-origin:0 0;transform:scaleX(1.3088);">DISTRIBUIDORA LA 8</span>
<span class="t" style="right:686.5px;top:204px;font-size:11px;line-height:11px;color:#151515;transform-origin:100% 0;transform:scaleX(1.1385);">Categoría</span>
<div style="left:334px;top:202px;width:176px;height:21px;border-top:1px solid #a0a0a0;border-left:1px solid #a0a0a0;border-right:1px solid #fff;border-bottom:1px solid #fff;"></div>
<div style="left:335px;top:203px;width:174px;height:19px;background:#fff;border-top:1px solid #696969;border-left:1px solid #696969;border-right:1px solid #e3e3e3;border-bottom:1px solid #e3e3e3;"></div>
<div style="left:491px;top:204px;width:17px;height:17px;background:#f0f0f0;border-top:1px solid #fff;border-left:1px solid #fff;border-right:1px solid #696969;border-bottom:1px solid #696969;"></div>
<div style="left:491px;top:204px;width:16px;height:16px;border-right:1px solid #a0a0a0;border-bottom:1px solid #a0a0a0;"></div>
<svg style="left:496px;top:211.0px" width="7" height="4" viewBox="0 0 7 4"><path d="M0 0H7L3.5 4Z" fill="#000"/></svg>
<span class="t" style="left:338.3px;top:209px;font-size:10px;line-height:10px;font-weight:bold;color:#1d6097;-webkit-text-stroke:0.3px currentColor;transform-origin:0 0;transform:scaleX(1.3019);">Cuadernos</span>
<div style="left:651px;top:175px;width:25px;height:25px;background:#f0f0f0;border-top:1px solid #fff;border-left:1px solid #fff;border-right:1px solid #696969;border-bottom:1px solid #696969;"></div>
<div style="left:652px;top:176px;width:23px;height:23px;border-right:1px solid #a0a0a0;border-bottom:1px solid #a0a0a0;"></div>
<svg style="left:656px;top:179px" width="16" height="14" viewBox="0 0 16 14"><ellipse cx="5" cy="4.2" rx="3.8" ry="4.2" fill="#f0a030"/><ellipse cx="5" cy="3" rx="3" ry="1.6" fill="#d98a28"/>
<path d="M0.8 12.8 Q0.8 8.3 5 8.3 Q10.6 8.3 10.8 12.8Z" fill="#2ea43a"/><path d="M4 8.6 L5.3 11 L6.6 8.6Z" fill="#fff"/>
<path d="M9 4.3 H15 M12 1.2 V7.4" stroke="#1fc21f" stroke-width="2.2"/></svg>
<div style="left:518px;top:201px;width:25px;height:21px;background:#f0f0f0;border-top:1px solid #fff;border-left:1px solid #fff;border-right:1px solid #696969;border-bottom:1px solid #696969;"></div>
<div style="left:519px;top:202px;width:23px;height:19px;border-right:1px solid #a0a0a0;border-bottom:1px solid #a0a0a0;"></div>
<div style="left:518px;top:222px;width:6px;height:1px;background:#000;"></div>
<svg style="left:523px;top:203px" width="16" height="14" viewBox="0 0 16 14"><path d="M0.5 1 H5 L6 3 H15 V12.5 H0.5Z" fill="#4f8ed8" stroke="#3a6fba" stroke-width=".6"/>
<rect x="1.5" y="4.5" width="13" height="7.5" fill="#cfe6fb"/><rect x="1.5" y="4.5" width="5" height="7.5" fill="#fff"/>
<path d="M2 6.5 H6 M2 8.5 H5" stroke="#8d8d8d" stroke-width=".9"/>
<path d="M12 2 L14 4 L6 11 L4.4 9.4Z" fill="#4e92e2"/><path d="M13.4 0.4 L15.8 2.8 L14 4 L12 2Z" fill="#d8452a"/><path d="M4.4 9.4 L6 11 L3 12Z" fill="#333"/></svg>
<div style="left:199px;top:233px;width:504px;height:34px;border:1px solid #fff;"></div>
<div style="left:198px;top:232px;width:504px;height:34px;border:1px solid #a0a0a0;"></div>
<div style="left:205.7px;top:230px;width:66px;height:6px;background:#f0f0f0;"></div>
<span class="t" style="left:207.7px;top:228px;font-size:11px;line-height:11px;font-weight:bold;color:#000;-webkit-text-stroke:0.3px currentColor;transform-origin:0 0;transform:scaleX(1.1794);">Ubicación</span>
<span class="t" style="right:686.5px;top:244px;font-size:11px;line-height:11px;color:#151515;transform-origin:100% 0;transform:scaleX(1.0991);">Estante</span>
<div style="left:334px;top:239px;width:97px;height:21px;background:#fff;border:1px solid #6b6b6b;"></div>
<span class="t" style="left:337px;top:242px;font-size:11px;line-height:11px;font-weight:bold;color:#1d6097;transform-origin:0 0;transform:scaleX(1.3648);">-</span>
<div style="left:199px;top:273px;width:504px;height:58px;border:1px solid #fff;"></div>
<div style="left:198px;top:272px;width:504px;height:58px;border:1px solid #a0a0a0;"></div>
<div style="left:205.7px;top:270px;width:77px;height:6px;background:#f0f0f0;"></div>
<span class="t" style="left:207.7px;top:268px;font-size:11px;line-height:11px;font-weight:bold;color:#000;-webkit-text-stroke:0.3px currentColor;transform-origin:0 0;transform:scaleX(1.2058);">Existencias</span>
<span class="t" style="right:686.5px;top:287px;font-size:11px;line-height:11px;color:#151515;transform-origin:100% 0;transform:scaleX(1.1170);">Existencia</span>
<div style="left:334px;top:282px;width:81px;height:21px;background:#fff;border:1px solid #6b6b6b;"></div>
<span class="t" style="left:341px;top:286px;font-size:11px;line-height:11px;font-weight:bold;color:#1d6097;-webkit-text-stroke:0.2px currentColor;transform-origin:0 0;transform:scaleX(0.8173);">1</span>
<span class="t" style="right:686.5px;top:311px;font-size:11px;line-height:11px;color:#151515;transform-origin:100% 0;transform:scaleX(1.1403);">Exit. Mínima</span>
<div style="left:334px;top:306px;width:81px;height:21px;background:#fff;border:1px solid #6b6b6b;"></div>
<span class="t" style="left:341px;top:310px;font-size:11px;line-height:11px;font-weight:bold;color:#1d6097;-webkit-text-stroke:0.2px currentColor;transform-origin:0 0;transform:scaleX(1.1442);">2</span>
<div style="left:199px;top:345px;width:504px;height:194px;border:1px solid #fff;"></div>
<div style="left:198px;top:344px;width:504px;height:194px;border:1px solid #a0a0a0;"></div>
<div style="left:205.7px;top:342px;width:121px;height:6px;background:#f0f0f0;"></div>
<span class="t" style="left:207.7px;top:340px;font-size:11px;line-height:11px;font-weight:bold;color:#000;-webkit-text-stroke:0.3px currentColor;transform-origin:0 0;transform:scaleX(1.2346);">Detalle de Precios</span>
<span class="t" style="right:686.5px;top:359px;font-size:11px;line-height:11px;color:#151515;transform-origin:100% 0;transform:scaleX(1.1275);">Precio Costo</span>
<div style="left:334px;top:354px;width:129px;height:21px;background:#fff;border:1px solid #6b6b6b;"></div>
<span class="t" style="left:341px;top:358px;font-size:11px;line-height:11px;font-weight:bold;color:#1d6097;-webkit-text-stroke:0.2px currentColor;transform-origin:0 0;transform:scaleX(1.2896);">$13.900,00</span>
<span class="t" style="right:686.5px;top:383px;font-size:11px;line-height:11px;color:#151515;transform-origin:100% 0;transform:scaleX(1.1879);">Impuesto %</span>
<div style="left:334px;top:378px;width:81px;height:21px;background:#fff;border:1px solid #6b6b6b;"></div>
<span class="t" style="left:341px;top:382px;font-size:11px;line-height:11px;font-weight:bold;color:#1d6097;-webkit-text-stroke:0.2px currentColor;transform-origin:0 0;transform:scaleX(1.1442);">0</span>
<span class="t" style="right:690px;top:407px;font-size:11px;line-height:11px;color:#151515;transform-origin:100% 0;transform:scaleX(1.1903);">P. Cost. Con Imp</span>
<div style="left:334px;top:402px;width:129px;height:21px;background:#fff;border:1px solid #6b6b6b;"></div>
<span class="t" style="left:341px;top:406px;font-size:11px;line-height:11px;font-weight:bold;color:#1d6097;-webkit-text-stroke:0.2px currentColor;transform-origin:0 0;transform:scaleX(1.2896);">$13.900,00</span>
<span class="t" style="right:694.5px;top:439px;font-size:11px;line-height:11px;color:#151515;transform-origin:100% 0;transform:scaleX(1.1460);">Precio Venta 1</span>
<div style="left:334px;top:434px;width:49px;height:21px;background:#fff;border:1px solid #6b6b6b;"></div>
<span class="t" style="left:337px;top:438px;font-size:11px;line-height:11px;font-weight:bold;color:#1d6097;-webkit-text-stroke:0.2px currentColor;transform-origin:0 0;transform:scaleX(1.2715);">21,91</span>
<div style="left:390px;top:434px;width:129px;height:21px;background:#fff;border:1px solid #6b6b6b;"></div>
<span class="t" style="left:397px;top:438px;font-size:11px;line-height:11px;font-weight:bold;color:#1d6097;-webkit-text-stroke:0.2px currentColor;transform-origin:0 0;transform:scaleX(1.2896);">$17.800,00</span>
<div style="left:526px;top:434px;width:113px;height:21px;background:#fff;border:1px solid #6b6b6b;"></div>
<span class="t" style="left:529px;top:437px;font-size:13px;line-height:13px;font-weight:bold;color:#6d6d6d;-webkit-text-stroke:0.2px currentColor;transform-origin:0 0;transform:scaleX(1.2103);">$3.900,00</span>
<span class="t" style="right:694.5px;top:463px;font-size:11px;line-height:11px;color:#151515;transform-origin:100% 0;transform:scaleX(1.1460);">Precio Venta 2</span>
<div style="left:334px;top:458px;width:49px;height:21px;background:#fff;border:1px solid #6b6b6b;"></div>
<span class="t" style="left:337px;top:462px;font-size:11px;line-height:11px;font-weight:bold;color:#1d6097;-webkit-text-stroke:0.2px currentColor;transform-origin:0 0;transform:scaleX(1.2715);">21,91</span>
<div style="left:390px;top:458px;width:129px;height:21px;background:#fff;border:1px solid #6b6b6b;"></div>
<span class="t" style="left:397px;top:462px;font-size:11px;line-height:11px;font-weight:bold;color:#1d6097;-webkit-text-stroke:0.2px currentColor;transform-origin:0 0;transform:scaleX(1.2896);">$17.800,00</span>
<div style="left:526px;top:458px;width:113px;height:21px;background:#fff;border:1px solid #6b6b6b;"></div>
<span class="t" style="left:529px;top:461px;font-size:13px;line-height:13px;font-weight:bold;color:#6d6d6d;-webkit-text-stroke:0.2px currentColor;transform-origin:0 0;transform:scaleX(1.2103);">$3.900,00</span>
<span class="t" style="right:694.5px;top:487px;font-size:11px;line-height:11px;color:#151515;transform-origin:100% 0;transform:scaleX(1.1460);">Precio Venta 3</span>
<div style="left:334px;top:482px;width:49px;height:21px;background:#fff;border:1px solid #6b6b6b;"></div>
<span class="t" style="left:337px;top:486px;font-size:11px;line-height:11px;font-weight:bold;color:#1d6097;-webkit-text-stroke:0.2px currentColor;transform-origin:0 0;transform:scaleX(1.2715);">21,91</span>
<div style="left:390px;top:482px;width:129px;height:21px;background:#fff;border:1px solid #6b6b6b;"></div>
<span class="t" style="left:397px;top:486px;font-size:11px;line-height:11px;font-weight:bold;color:#1d6097;-webkit-text-stroke:0.2px currentColor;transform-origin:0 0;transform:scaleX(1.2896);">$17.800,00</span>
<div style="left:526px;top:482px;width:113px;height:21px;background:#fff;border:1px solid #6b6b6b;"></div>
<span class="t" style="left:529px;top:485px;font-size:13px;line-height:13px;font-weight:bold;color:#6d6d6d;-webkit-text-stroke:0.2px currentColor;transform-origin:0 0;transform:scaleX(1.2103);">$3.900,00</span>
<span class="t" style="right:694.5px;top:511px;font-size:11px;line-height:11px;color:#151515;transform-origin:100% 0;transform:scaleX(1.1238);">Precio Mínimo</span>
<div style="left:334px;top:506px;width:49px;height:21px;background:#fff;border:1px solid #6b6b6b;"></div>
<span class="t" style="left:337px;top:510px;font-size:11px;line-height:11px;font-weight:bold;color:#1d6097;-webkit-text-stroke:0.2px currentColor;transform-origin:0 0;transform:scaleX(1.1442);">0</span>
<div style="left:390px;top:506px;width:129px;height:21px;background:#fff;border:1px solid #6b6b6b;"></div>
<span class="t" style="left:397px;top:510px;font-size:11px;line-height:11px;font-weight:bold;color:#1d6097;-webkit-text-stroke:0.2px currentColor;transform-origin:0 0;transform:scaleX(1.2896);">$13.900,00</span>
<div style="left:526px;top:506px;width:113px;height:21px;background:#fff;border:1px solid #6b6b6b;"></div>
<span class="t" style="left:529px;top:509px;font-size:13px;line-height:13px;font-weight:bold;color:#6d6d6d;-webkit-text-stroke:0.2px currentColor;transform-origin:0 0;transform:scaleX(1.1988);">$0,00</span>
<div style="left:198px;top:539px;width:88px;height:40px;background:#f0f0f0;border-top:1px solid #fff;border-left:1px solid #fff;border-right:1px solid #696969;border-bottom:1px solid #696969;"></div>
<div style="left:199px;top:540px;width:86px;height:38px;border-right:1px solid #a0a0a0;border-bottom:1px solid #a0a0a0;"></div>
<span class="t" style="left:225.59px;top:564px;font-size:11px;line-height:11px;font-weight:bold;color:#000;-webkit-text-stroke:0.3px currentColor;transform-origin:50% 0;transform:scaleX(1.1958);"><u>N</u>uevo</span>
<svg style="left:234px;top:543px" width="16" height="16" viewBox="0 0 16 16"><defs><linearGradient id="pg9" x1="0" y1="0" x2="1" y2="1"><stop offset="0" stop-color="#ffffff"/><stop offset="1" stop-color="#b9dcef"/></linearGradient></defs>
<path d="M2.5 0.5 H11.2 L14.5 3.8 V15.5 H2.5Z" fill="url(#pg9)" stroke="#8d96ba" stroke-width=".85"/>
<path d="M11.2 0.5 V3.8 H14.5Z" fill="#7f9fd8" stroke="#8b93b6" stroke-width=".6"/>
<path d="M6.4 8.2 V10.8 Q6.4 12.5 9 12.5 H11" stroke="#157d15" stroke-width="1.7" fill="none"/>
<path d="M10.4 10.2 L13.8 12.5 L10.4 14.8Z" fill="#22a322" stroke="#0b5a0b" stroke-width=".6"/></svg>
<div style="left:286px;top:539px;width:88px;height:40px;background:#f0f0f0;border-top:1px solid #fff;border-left:1px solid #fff;border-right:1px solid #696969;border-bottom:1px solid #696969;"></div>
<div style="left:287px;top:540px;width:86px;height:38px;border-right:1px solid #a0a0a0;border-bottom:1px solid #a0a0a0;"></div>
<span class="t" style="left:309.00px;top:564px;font-size:11px;line-height:11px;font-weight:bold;color:#000;-webkit-text-stroke:0.3px currentColor;transform-origin:50% 0;transform:scaleX(1.2199);"><u>G</u>uardar</span>
<svg style="left:322px;top:543px" width="16" height="16" viewBox="0 0 16 16"><rect x="1" y="0" width="15" height="16" rx="1.2" fill="#4f51ba"/>
<rect x="13" y="1" width="3" height="15" fill="#3e3fa8"/>
<rect x="3.2" y="0.6" width="10.6" height="7.2" fill="#ffffff"/>
<rect x="5.2" y="2.1" width="6.6" height="3.8" fill="#cbcbcb"/>
<rect x="5" y="10" width="7.4" height="6" fill="#ffffff"/>
<path d="M5 10 H8.3 L6.8 14 H5Z" fill="#25258c"/></svg>
<div style="left:374px;top:539px;width:88px;height:40px;background:#f0f0f0;border-top:1px solid #fff;border-left:1px solid #fff;border-right:1px solid #696969;border-bottom:1px solid #696969;"></div>
<div style="left:375px;top:540px;width:86px;height:38px;border-right:1px solid #a0a0a0;border-bottom:1px solid #a0a0a0;"></div>
<span class="t" style="left:393.95px;top:564px;font-size:11px;line-height:11px;font-weight:bold;color:#000;-webkit-text-stroke:0.3px currentColor;transform-origin:50% 0;transform:scaleX(1.2312);"><u>M</u>odificar</span>
<svg style="left:410px;top:543px" width="16" height="16" viewBox="0 0 16 16"><defs><linearGradient id="mg11" x1="0" y1="0" x2="1" y2="1"><stop offset="0.2" stop-color="#ffffff"/><stop offset="1" stop-color="#9fd8ff"/></linearGradient></defs>
<rect x="1.5" y="2.5" width="14" height="12.5" fill="url(#mg11)" stroke="#1b55a3"/>
<rect x="1" y="2" width="15" height="2" fill="#1b55a3"/>
<path d="M3.5 6.5H7M3.5 8.5H6M3.5 10.5H5" stroke="#9a9a9a"/>
<path d="M11.8 2.2 L14.4 4.8 L7.8 10.4 L6 8.6Z" fill="#5b9be9" stroke="#3a78c8" stroke-width=".5"/>
<path d="M6.6 8 L11.9 3.4" stroke="#a9d0ff" stroke-width=".9"/>
<path d="M13 0 L16.2 3.2 L14.4 4.8 L11.8 2.2Z" fill="#d8452a"/>
<path d="M6 8.6 L7.8 10.4 L3.8 12Z" fill="#2e2e2e"/></svg>
<div style="left:462px;top:539px;width:88px;height:40px;background:#f0f0f0;border-top:1px solid #fff;border-left:1px solid #fff;border-right:1px solid #696969;border-bottom:1px solid #696969;"></div>
<div style="left:463px;top:540px;width:86px;height:38px;border-right:1px solid #a0a0a0;border-bottom:1px solid #a0a0a0;"></div>
<span class="t" style="left:489.89px;top:564px;font-size:11px;line-height:11px;font-weight:bold;color:#000;-webkit-text-stroke:0.3px currentColor;transform-origin:50% 0;transform:scaleX(1.2780);"><u>C</u>errar</span>
<svg style="left:498px;top:543px" width="16" height="16" viewBox="0 0 16 16"><defs><linearGradient id="dg12" x1="0" y1="0" x2="1" y2="0"><stop offset="0" stop-color="#7272d2"/><stop offset=".5" stop-color="#9a98f2"/><stop offset="1" stop-color="#7c7cdc"/></linearGradient></defs>
<rect x="8.5" y="1.5" width="6.2" height="12.6" fill="#c3dcf8" stroke="#4b5273"/>
<rect x="8.5" y="8" width="4.7" height="4" fill="#0f9020"/>
<path d="M2 2.5 L4 2.5 L4 1.6 L6 1.6 L6 0.2 L8.6 0.2 V16 L6 16 L6 15 L4 15 L4 14 L2 14Z" fill="url(#dg12)"/>
<rect x="7.8" y="0.2" width="1" height="15.8" fill="#2c2c5e"/>
<rect x="6" y="7.3" width="1.3" height="2" fill="#fff"/></svg>
</body></html>
